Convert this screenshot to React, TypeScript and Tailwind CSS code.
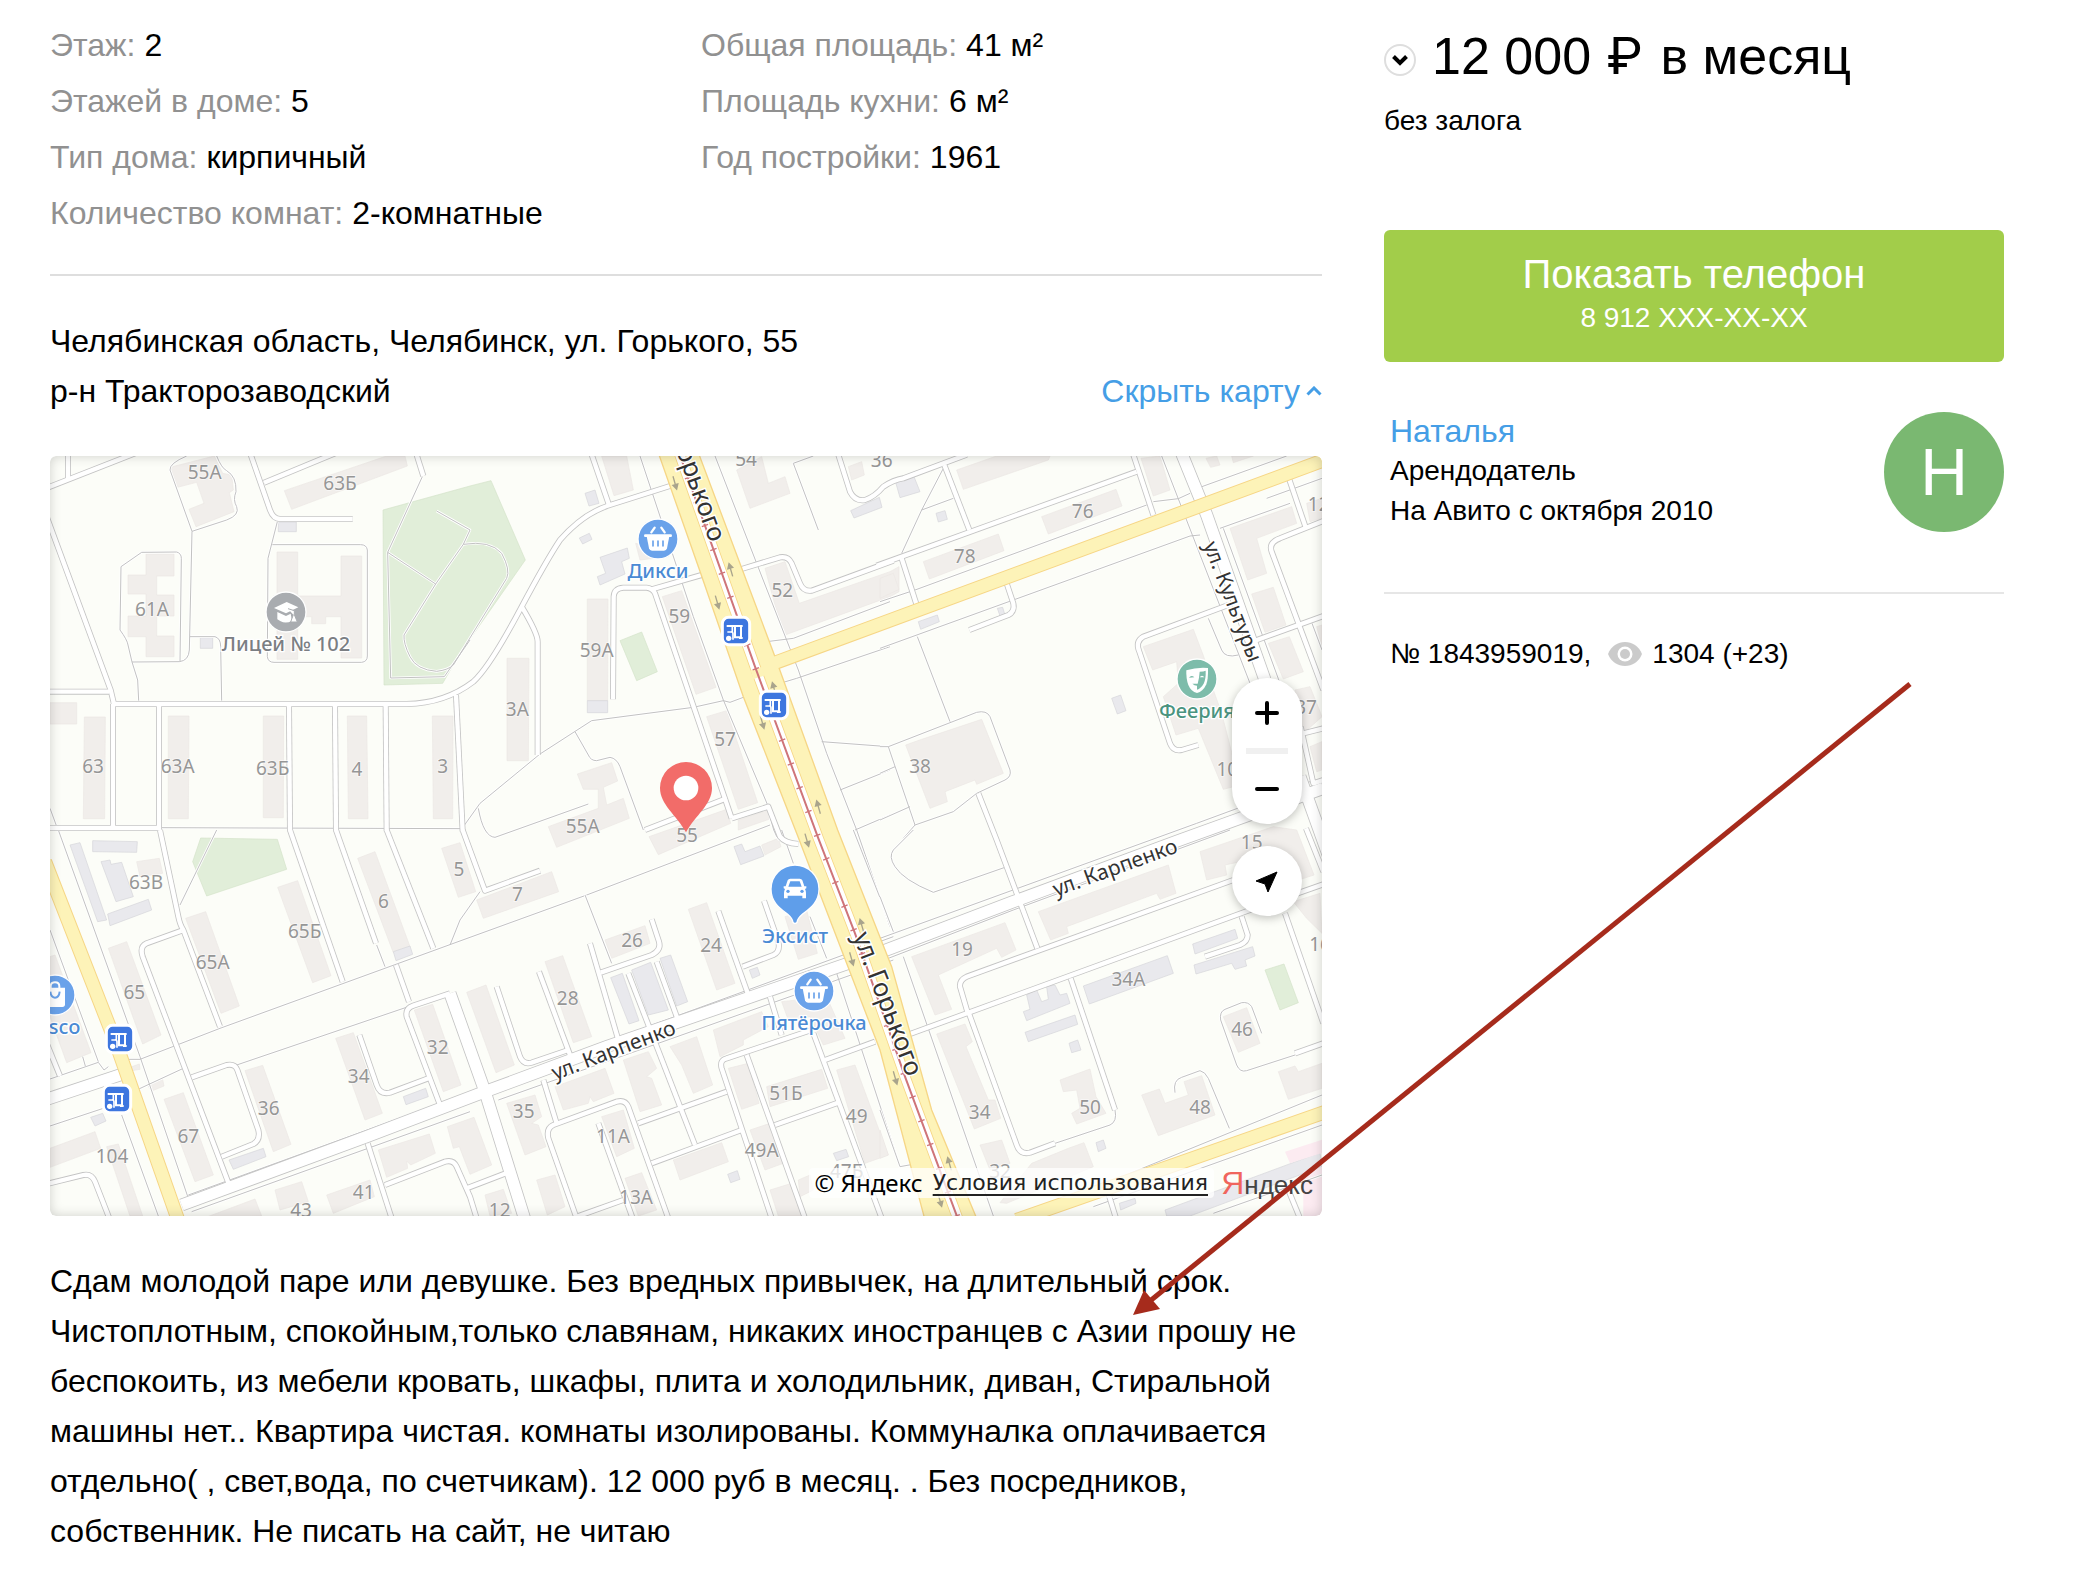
import React from "react";

type Label = [string, number, number];
type Tile = {
  x: number;
  y: number;
  buildings: string[];
  annexes: string[];
  parks: string[];
  lines: string[];
  roads: string[];
  labels: Label[];
};

/* The map is drawn in thirds of a pixel; each tile holds its own local coordinates. */
const tiles: Tile[] = [
  {
    x: 0,
    y: 0,
    buildings: [
      "390,52 523,18 548,70 575,75 580,120 568,128 582,185 468,230 447,178 492,160 470,97 412,112",
      "733,122 1040,18 1095,18 1102,48 755,178",
      "318,312 402,312 402,378 350,378 350,435 402,435 402,498 350,498 350,558 402,558 402,620 318,620 318,560 264,560 264,498 318,498 318,432 264,432 264,375 318,375",
      "711,306 773,306 773,438 903,438 903,318 965,318 965,624 903,624 903,500 857,500 857,521 815,521 815,500 773,500 773,628 711,628",
      "133,801 196,801 194,1106 130,1106",
      "30,758 110,758 110,822 30,822",
      "385,798 447,798 445,1106 385,1106",
      "670,798 731,798 730,1103 670,1103",
      "922,798 980,798 984,1106 925,1106",
      "1177,798 1239,798 1238,1106 1180,1106",
    ],
    annexes: ["715,216 769,216 769,245 715,245", "481,563 518,563 518,595 481,595"],
    parks: ["1029,180 1290,108 1353,92 1456,330 1260,610 1208,700 1032,705"],
    lines: [
      "M440,18 Q388,40 390,60 L456,244 L560,210 Q600,195 590,170 Q578,150 588,125 Q590,80 560,62 Q545,55 530,18",
      "M456,244 L448,600 Q446,632 418,635 L276,636 L264,585 Q262,570 240,540 L243,350 L305,307 L410,306 Q424,310 424,325 L420,635",
      "M276,636 L293,690 L296,752",
      "M450,560 L525,560 Q542,565 542,590 L545,752",
      "M712,215 L684,325 L682,620 Q684,637 702,637 L965,637 Q982,635 982,618 L982,300 Q980,284 962,284 L697,284",
      "M1147,80 L1043,307 L1052,684 L1213,680 L1290,570",
      "M1043,307 L1187,402 L1270,283 L1290,240 L1190,183",
      "M1187,402 L1092,555 Q1090,580 1110,620 Q1130,660 1190,664 Q1225,660 1240,645",
      "M1270,283 Q1350,270 1385,310 Q1412,360 1400,385 L1240,645",
      "M360,1133 L1275,1136",
      "M30,1075 L65,1170",
    ],
    roads: [
      "M84,0 V90",
      "M20,114 L290,8",
      "M20,200 L212,720 L222,762",
      "M215,762 H1100 Q1215,760 1300,695 Q1350,650 1445,470 Q1520,330 1560,270 Q1630,190 1710,165 L1890,108",
      "M20,725 H208",
      "M630,8 L690,180 Q700,207 720,207 H938",
      "M672,98 L890,8",
      "M1128,8 L1150,78",
      "M219,762 V1134",
      "M357,768 V1140",
      "M747,768 L750,1144",
      "M885,768 L888,1144",
      "M1037,768 L1040,1144",
      "M1248,735 L1268,1144",
      "M20,1134 H360",
    ],
    labels: [
      ["55А", 494, 87],
      ["63Б", 900, 120],
      ["61А", 336, 497],
      ["63", 159, 970],
      ["63А", 413, 970],
      ["63Б", 698, 974],
      ["4", 951, 978],
      ["3", 1208, 970],
    ],
  },
  {
    x: 1260,
    y: 0,
    buildings: [
      "425,18 500,18 520,120 462,137",
      "527,280 600,300 625,320 540,330",
      "830,60 905,20 925,100 975,80 990,130 870,175",
      "1165,50 1205,35 1213,75 1175,90",
      "382,447 444,447 443,752 382,752",
      "141,625 207,625 205,932 141,932",
      "607,440 665,422 768,712 708,733",
      "740,800 800,782 893,1058 835,1078",
      "352,972 455,938 473,993 430,1012 440,1065 490,1045 508,1105 290,1192 265,1130 415,1075 415,1018 370,1018",
      "835,1110 925,1080 935,1105 835,1140",
      "567,1160 800,1078 812,1120 595,1214",
      "915,355 975,335 1018,460 1290,365 1317,350 1317,425 1290,440 975,555 945,465",
    ],
    annexes: [
      "382,752 443,752 443,788 382,788",
      "375,130 405,120 417,160 387,168",
      "358,264 388,250 396,268 368,282",
      "420,322 502,294 508,325 485,335 495,372 420,405 412,380 437,370",
      "1172,182 1258,142 1266,172 1182,204",
    ],
    parks: ["480,572 545,546 592,665 530,692"],
    lines: [
      "M540,18 L700,500 L790,750 L925,1070 Q940,1160 960,1170",
      "M765,18 L890,340 L1015,660 L1100,910 L1190,1140 L1290,1430",
      "M1060,18 L1000,40 L1075,240",
      "M920,575 L1000,565 L1290,455",
      "M960,700 L1010,685 L1290,590",
      "M1085,875 L1285,890",
      "M1140,1020 L1290,960",
      "M1185,1140 L1290,1095",
      "M850,742 L810,757 L790,752 L700,772 L395,812 L240,912 L60,1060 L10,1130",
      "M345,845 L385,915 Q392,932 410,932 L450,922 Q470,925 480,950 L550,1140",
      "M55,1075 Q70,1160 105,1162 L385,1062",
    ],
    roads: [
      "M393,8 L447,165",
      "M185,470 Q233,550 233,575 V915",
      "M459,748 L461,440 Q462,415 490,413 H560 Q578,415 585,430 L815,1105",
      "M575,418 L725,375",
      "M835,360 L960,322 Q985,318 995,340 L1020,400 Q1030,425 1055,422 L1300,332",
      "M555,1140 L800,1045",
      "M815,1105 L925,1070 L960,1160 Q975,1180 1015,1182",
      "M1133,8 L1170,125 Q1185,155 1215,150 Q1245,140 1270,110 Q1300,90 1330,85 L1520,14",
    ],
    labels: [
      ["54", 858, 48],
      ["36", 1265, 50],
      ["52", 967, 442],
      ["59", 658, 520],
      ["59А", 410, 622],
      ["3А", 172, 797],
      ["57", 795, 888],
      ["55А", 368, 1150],
      ["55", 681, 1176],
    ],
  },
  {
    x: 2520,
    y: 0,
    buildings: [
      "230,60 350,18 510,18 505,30 250,118",
      "783,25 840,18 870,120 820,138",
      "978,25 1010,18 1020,45 992,52",
      "1055,18 1120,18 1060,38",
      "485,200 708,118 726,168 505,252",
      "130,335 355,252 372,302 148,387",
      "0,385 40,370 57,418 0,445",
      "1050,235 1235,170 1250,220 1130,265 1160,370 1103,390",
      "1280,160 1326,145 1326,205 1290,215",
      "1115,432 1180,412 1218,525 1155,547",
      "1165,580 1228,560 1270,665 1210,687",
      "1245,720 1290,710 1326,800 1270,850",
      "790,590 940,538 972,622 1000,720 1025,790 1080,1005 1030,1018 955,835 888,855 850,740 895,700 890,635 818,660",
      "77,885 125,868 305,808 370,970 290,1003 285,990 195,1025 202,1055 150,1075",
      "1290,890 1326,875 1326,960 1310,965",
      "1310,530 1326,525 1326,590",
    ],
    annexes: [
      "45,90 100,75 120,125 60,143",
      "168,190 195,182 202,208 175,216",
      "115,515 172,495 178,515 122,538",
      "352,475 368,472 374,492 360,498",
      "695,745 722,735 738,782 712,792",
    ],
    parks: [],
    lines: [
      "M190,55 L125,180 L65,310",
      "M125,180 L220,145",
      "M0,455 L105,420 L800,165",
      "M820,155 L895,146 L930,130",
      "M960,112 L1220,18",
      "M845,18 L1110,700",
      "M1020,235 L1230,160",
      "M0,595 L400,450 L930,258 L960,255",
      "M112,560 L210,815",
      "M0,890 H25 L105,1125 L70,1165",
      "M25,890 L290,787 Q320,780 330,800 L390,960 Q395,980 375,990 L290,1030 L220,1085 L105,1125",
      "M0,970 L45,950",
      "M0,1110 L90,1070",
      "M985,505 L1025,600 Q1035,625 1075,615",
      "M1030,235 L1200,700",
      "M1296,520 L1326,600",
      "M1326,1030 L1298,1038 L1326,1120",
      "M1160,145 L1326,85",
    ],
    roads: [
      "M193,45 L268,240",
      "M-10,347 L770,65",
      "M65,325 L110,465",
      "M758,8 L820,195",
      "M1225,80 L1278,235",
      "M1330,213 L1200,265 Q1165,278 1175,305 L1330,720",
      "M380,400 L400,460 Q405,485 385,495 L268,540",
      "M1045,465 L790,560 Q765,575 778,605 L870,880 Q880,905 905,900 L955,885",
      "M1125,572 L1330,498",
      "M1270,850 L1330,835",
      "M1262,830 L1300,1000 L1330,990",
      "M295,1030 L350,1170 L472,1495",
    ],
    labels: [
      ["78", 254, 338],
      ["76", 608, 205],
      ["38", 120, 968],
      ["12", 1316, 182],
      ["37", 1278, 792],
      ["10", 1042, 978],
    ],
  },
  {
    x: 0,
    y: 1140,
    buildings: [
      "205,355 260,335 363,615 308,642",
      "437,265 497,245 598,528 543,550",
      "713,172 773,152 873,437 818,458",
      "953,85 1005,65 1110,350 1060,368",
      "1205,55 1260,38 1307,185 1255,202",
      "290,95 358,85 368,130 300,140",
      "372,808 430,788 520,1035 465,1055",
      "615,722 668,706 753,943 700,965",
      "887,625 940,608 1027,850 975,870",
      "1123,540 1178,523 1263,765 1210,785",
      "1015,960 1168,912 1186,970 1112,1005 1100,993 1103,1015 1040,1042",
      "1222,890 1302,862 1355,1005 1290,1033 1258,950 1240,955",
      "705,1080 785,1055 805,1115 720,1140",
      "860,1095 990,1050 1003,1100 880,1150",
      "490,1165 645,1107 665,1158",
      "30,955 165,905 182,955 30,1012",
      "200,950 235,942 308,1158 270,1158",
      "30,380 45,375 153,668 80,698 30,560",
      "270,712 298,702 300,718 275,722",
      "322,765 368,748 372,768 335,783",
    ],
    annexes: [
      "158,32 292,35 290,67 158,65",
      "90,45 120,38 200,270 173,275",
      "183,95 210,90 213,103 245,97 280,200 228,215",
      "203,252 325,208 335,240 210,287",
      "1060,365 1110,348 1118,373 1068,392",
      "1090,800 1157,775 1165,800 1098,824",
      "567,990 670,955 678,980 580,1018",
      "152,862 188,850 198,873 165,888",
    ],
    parks: ["482,24 712,28 740,118 500,198 458,95"],
    lines: [
      "M55,0 L300,680 L445,1105",
      "M265,688 H300 L540,595 L1290,322 L1640,195 L2190,-15",
      "M290,780 L430,715",
      "M590,705 L1105,530",
      "M1010,345 L1035,410",
      "M1230,345 L1260,270 L1320,185",
      "M530,0 L420,225",
      "M30,300 L175,695",
      "M30,747 L175,697 L192,720 L205,710",
      "M30,888 L190,835",
      "M245,855 L355,1158",
      "M445,1095 L1290,788",
      "M455,1145 L1290,845",
      "M128,680 L136,708",
    ],
    roads: [
      "M360,0 L415,260 Q420,285 430,300 L540,590",
      "M750,0 L908,455",
      "M888,0 L1008,340",
      "M1040,0 L1180,355",
      "M1268,0 L1335,182 L1500,122",
      "M425,302 L320,340 Q298,350 308,380 L565,1058",
      "M455,742 L560,705 Q585,700 592,720 L655,900 Q662,930 640,942 L545,980",
      "M1068,405 L1107,515",
      "M1230,490 L1120,527 Q1095,535 1100,560 L1200,825",
      "M958,615 L1010,765 Q1020,795 1050,788 L1165,745",
      "M983,940 L1055,1165",
      "M1035,1065 L1215,995 Q1240,988 1250,1010 L1290,1100 L1310,1165",
      "M20,1062 L130,1035 Q155,1030 165,1055 L208,1165",
      "M20,640 L60,738",
    ],
    labels: [
      ["63В", 318, 176],
      ["6", 1030, 235],
      ["5", 1257, 137],
      ["65А", 518, 417],
      ["65Б", 794, 323],
      ["65", 283, 507],
      ["32", 1193, 673],
      ["34", 956, 758],
      ["36", 686, 855],
      ["67", 445, 938],
      ["104", 216, 998],
      ["41", 971, 1106],
      ["43", 783, 1160],
    ],
  },
  {
    x: 1260,
    y: 1140,
    buildings: [
      "50,210 275,125 296,185 70,265",
      "435,330 555,287 570,340 455,385",
      "685,238 740,218 825,460 770,480",
      "255,395 308,377 395,620 340,638",
      "20,487 78,465 163,705 108,728",
      "975,260 1040,240 1072,370 1015,388",
      "965,515 1100,500 1155,625 1090,645 1050,560 985,570",
      "760,600 905,545 925,590 850,630 850,645 780,680",
      "630,650 710,620 758,765 700,790 665,705",
      "490,690 565,665 590,715 560,740 575,745 605,825 540,845",
      "285,770 435,715 462,790 400,815 390,800 385,820 310,840",
      "140,820 225,795 245,860 215,880 235,885 258,950 195,975",
      "425,860 490,840 523,955 470,980",
      "495,1045 545,1028 590,1140 535,1158",
      "230,1050 285,1035 315,1130 262,1155",
      "75,1095 130,1078 155,1150 90,1158",
      "640,990 785,938 805,995 660,1050",
      "805,715 865,700 897,820 845,838",
      "870,900 930,880 970,1000 915,1020",
      "920,770 1085,718 1103,775 930,830",
      "1130,720 1185,705 1285,975 1215,1000",
      "1015,1050 1050,1035 1060,1080 1020,1100",
      "930,1080 995,1060 1025,1158 955,1158",
      "905,45 955,25 963,50 915,75",
    ],
    annexes: [
      "822,50 845,42 855,65 900,48 912,78 842,104",
      "452,443 487,430 537,572 507,582",
      "515,420 572,397 625,540 565,555",
      "600,385 632,375 683,515 650,528",
      "868,420 892,412 900,435 877,445",
      "1120,970 1158,958 1166,980 1130,992",
      "803,1033 832,1022 840,1048 812,1058",
    ],
    parks: [],
    lines: [
      "M85,765 L1300,320",
      "M115,810 L1300,390",
      "M375,195 L455,400",
      "M1050,260 L1100,385",
      "M1130,430 L1320,1010",
      "M1180,0 L1300,305",
      "M965,0 L1000,100",
    ],
    roads: [
      "M110,470 L180,680 Q190,705 215,698 L325,660",
      "M237,425 L332,680",
      "M390,340 L475,630",
      "M422,428 L575,375 Q605,360 597,335 L575,268",
      "M505,430 L705,945",
      "M590,395 L652,565",
      "M775,243 L865,495",
      "M912,212 L955,335 Q962,365 940,375 L848,410",
      "M930,500 L965,615",
      "M250,750 L290,880",
      "M350,1165 L265,925 Q258,895 280,885 L470,815 Q495,808 505,830 L625,1165",
      "M415,880 L518,1165",
      "M535,880 L800,785",
      "M575,1000 L845,900",
      "M935,1165 L785,715 Q778,690 800,685 L1055,600",
      "M860,675 L1035,1165",
      "M1060,610 L1265,1165",
      "M1095,690 L1245,635",
      "M945,885 L1135,818",
      "M20,1075 L150,1025",
      "M350,1160 L490,1110",
    ],
    labels: [
      ["7", 172, 213],
      ["26", 516, 352],
      ["24", 753, 367],
      ["28", 323, 526],
      ["35", 191, 863],
      ["11А", 459, 940],
      ["13А", 528, 1122],
      ["12", 119, 1160],
      ["49А", 905, 980],
      ["51Б", 978, 810],
      ["49", 1190, 880],
      ["47Б", 1160, 1045],
    ],
  },
  {
    x: 2520,
    y: 1140,
    buildings: [
      "95,380 375,278 408,360 365,382 350,355 175,435 215,538 165,555",
      "475,245 865,105 888,190 840,208 830,190 560,290 565,310 512,330",
      "960,65 1180,-10 1250,0 1302,135 1240,155 1150,80 1035,105 1040,135 980,150",
      "1240,215 1320,190 1326,310 1280,265",
      "170,612 255,582 277,635 258,650 325,810 345,810 362,865 283,897",
      "300,945 365,930 390,1000 330,1020",
      "455,1000 565,955 612,938 640,1010 380,1120 360,1118",
      "540,750 630,717 648,800 678,850 590,882 575,850 600,835 590,780 550,785",
      "785,795 838,777 855,820 925,795 912,755 965,737 1005,855 835,917",
      "1030,560 1100,533 1140,640 1075,667",
      "1195,725 1245,708 1255,725 1326,700 1326,775 1225,808",
      "0,900 25,975 0,985",
    ],
    annexes: [
      "610,468 862,377 880,430 628,522",
      "440,495 470,480 485,515 505,508 500,470 525,465 540,495 560,490 570,520 440,572 430,545 450,538",
      "435,607 585,555 593,583 445,635",
      "567,640 593,630 603,660 575,668",
      "648,938 670,930 678,955 655,965",
      "938,342 1065,298 1073,325 945,372",
      "942,405 1118,350 1125,378 1095,390 1100,408 1065,418 1055,400 948,432",
      "718,1120 765,1105 768,1120 722,1140",
      "855,1140 1320,968 1326,1010 930,1158 860,1158",
    ],
    parks: ["1155,420 1212,402 1255,518 1200,540"],
    lines: [
      "M705,840 Q712,875 690,885 L525,940",
      "M0,200 L40,305",
      "M100,0 L40,60 Q25,80 45,110 Q70,150 160,187 L375,112",
      "M70,380 L340,1158",
      "M0,325 L950,-20 L1290,-145",
      "M25,385 L400,240 L1050,0",
      "M1145,610 L1115,530 Q1105,515 1085,518 L1035,538 Q1018,545 1022,570 L1070,705 Q1080,728 1100,722 L1245,675",
      "M885,788 Q878,750 905,742 L960,722 Q975,725 985,745 L1048,895",
      "M750,1030 L1326,795",
      "M640,1130 L1326,885",
      "M0,840 L60,1010 L115,1000",
      "M1000,1150 L1326,1035",
    ],
    roads: [
      "M1278,-5 L1330,125",
      "M262,545 L240,470 Q238,450 260,440 L1060,150",
      "M90,612 L1110,240 L1330,163",
      "M265,545 L410,945 Q420,975 450,968 L525,940",
      "M572,445 L705,840",
      "M1085,260 L1103,315 Q1103,335 1080,345 L975,380",
      "M1215,250 L1330,580",
      "M1245,670 L1330,640",
      "M685,1090 L708,1165",
      "M1225,1080 L1260,1165",
    ],
    labels: [
      ["19", 246, 378],
      ["34А", 745, 468],
      ["15", 1115, 57],
      ["34", 299, 868],
      ["50", 630, 852],
      ["48", 960, 852],
      ["46", 1086, 618],
      ["32", 360, 1045],
      ["16", 1320, 362],
    ],
  },
];

/* Streets wider than a driveway, in whole-map coordinates. */
const streets = [
  "M425,2265 L980,2060 L1335,1925 L1700,1790 L2120,1645 L2520,1507 L2920,1355 L3420,1170 L3850,1015",
  "M20,1948 L245,1873",
  "M1230,1630 L1335,1925 L1455,2310",
  "M3425,10 L3500,195 L3675,690",
  "M3780,980 L3870,1230",
];

const directionArrows: [number, number, boolean][] = [
  [1905, 100, true],
  [2032, 458, true],
  [2072, 358, false],
  [2202, 715, false],
  [2167, 818, true],
  [2335, 1070, false],
  [2301, 1172, true],
  [2465, 1425, false],
  [2435, 1528, true],
  [2566, 1885, true],
  [2728, 2140, false],
  [2700, 2252, true],
];

const tramLine = "M1918,10 L2145,650 L2335,1165 L2445,1450 L2595,1880 L2755,2310";

function Basket() {
  return (
    <g fill="none" stroke="#fff" strokeWidth="6" strokeLinecap="round">
      <path d="M-20 -20 L-10 -34 M20 -20 L10 -34" strokeWidth="7" />
      <path d="M-38 -10 H38" strokeWidth="8" />
      <path d="M-34 -8 H34 L27 28 Q25 35 18 35 H-18 Q-25 35 -27 28 Z" fill="#fff" stroke="none" />
      <path d="M-15 6 V21 M0 6 V21 M15 6 V21" stroke="#6aa2ea" strokeWidth="5" />
    </g>
  );
}

function Poi(props: {
  x: number;
  y: number;
  color: string;
  text: string;
  ink: string;
  labelX?: number;
  children: React.ReactNode;
}) {
  return (
    <g transform={`translate(${props.x} ${props.y})`}>
      <circle r="60" fill={props.color} stroke="#fff" strokeWidth="4" />
      {props.children}
      <text
        x={props.labelX ?? 0}
        y="118"
        textAnchor="middle"
        fontSize="60"
        fontWeight="500"
        fill={props.ink}
        stroke="#fff"
        strokeWidth="8"
        paintOrder="stroke"
      >
        {props.text}
      </text>
    </g>
  );
}

function Stop({ x, y }: { x: number; y: number }) {
  return (
    <g transform={`translate(${x} ${y})`}>
      <rect x="-41" y="-41" width="82" height="82" rx="19" fill="#3d76df" stroke="#fff" strokeWidth="9" />
      <g fill="none" stroke="#fff" strokeWidth="6">
        <path d="M-28 -15 H20" />
        <path d="M-26 3 H-14 Q-9 3 -9 8 V26 M-11 -15 V3" strokeWidth="5" />
        <path d="M-3 -15 V19 H15 V-15" />
        <path d="M9 21 H20" />
      </g>
      <circle cx="-22" cy="22" r="8" fill="#fff" />
    </g>
  );
}

function CityMap() {
  return (
    <svg
      viewBox="30 18 3816 2280"
      className="block w-full rounded-md bg-[#fcfdf8] font-['Noto_Sans','Open_Sans',sans-serif]"
      role="img"
      aria-label="Карта: Челябинск, ул. Горького, 55"
    >
      {tiles.map((t, i) => (
        <g key={i} transform={`translate(${t.x} ${t.y})`}>
          {t.parks.map((p) => (
            <polygon key={p} points={p} fill="#e1eed9" stroke="#d3e3c9" strokeWidth="2" />
          ))}
          {t.buildings.map((p) => (
            <polygon key={p} points={p} fill="#f1eeeb" stroke="#ebe7e4" strokeWidth="2" />
          ))}
          {t.annexes.map((p) => (
            <polygon key={p} points={p} fill="#e9e9ed" stroke="#d5d5da" strokeWidth="2" />
          ))}
        </g>
      ))}
      <path d="M3735 2105 L3850 2068 V2108 L3750 2140 Z M3790 2165 L3850 2150 V2300 H3790 Z" fill="#fcebf1" />
      {tiles.map((t, i) => (
        <g key={i} transform={`translate(${t.x} ${t.y})`} fill="none" strokeLinejoin="round">
          {t.lines.map((d) => (
            <path key={d} d={d} stroke="#fff" strokeWidth="8" />
          ))}
          {t.lines.map((d) => (
            <path key={d} d={d} stroke="#c2c2c2" strokeWidth="3" />
          ))}
        </g>
      ))}
      <g fill="none" strokeLinejoin="round">
        {streets.map((d) => (
          <path key={d} d={d} stroke="#c4c4c4" strokeWidth="39" />
        ))}
        {tiles.map((t, i) => (
          <g key={i} transform={`translate(${t.x} ${t.y})`} stroke="#c4c4c4" strokeWidth="18">
            {t.roads.map((d) => (
              <path key={d} d={d} />
            ))}
          </g>
        ))}
        {streets.map((d) => (
          <path key={d} d={d} stroke="#fff" strokeWidth="34" />
        ))}
        {tiles.map((t, i) => (
          <g key={i} transform={`translate(${t.x} ${t.y})`} stroke="#fff" strokeWidth="13">
            {t.roads.map((d) => (
              <path key={d} d={d} />
            ))}
          </g>
        ))}
      </g>

      {/* main yellow roads */}
      <g fill="none">
        <path d="M2190 644 L3870 24 M15 1235 L228 1780 L415 2312 M2930 2310 L3870 1981" stroke="#f6d686" strokeWidth="43" />
        <path
          d="M1852 0 L1982 370 L2110 740 L2270 1150 L2520 1800 L2655 2310 H2812 L2675 1980 L2555 1550 L2393 1140 L2205 620 L1972 0 Z"
          fill="#fdf3b8"
          stroke="#f6d686"
          strokeWidth="4"
        />
        <path d="M2160 655 L3870 24 M15 1235 L228 1780 L415 2312 M2930 2310 L3870 1981" stroke="#fdf3b8" strokeWidth="37" />
        <path d={tramLine} stroke="#f6d686" strokeWidth="33" />
        <path d={tramLine} stroke="#fff" strokeWidth="28" />
        <path d="M2149 656 L2157 682" stroke="#fdf3b8" strokeWidth="36" />
        <path d={tramLine} stroke="#cf7579" strokeWidth="6" />
        <path d={tramLine} stroke="#cf7579" strokeWidth="20" strokeDasharray="4 72" />
      </g>
      {directionArrows.map(([x, y, down]) => (
        <path
          key={`${x}-${y}`}
          transform={`translate(${x} ${y}) rotate(${down ? -16 : 164})`}
          d="M-2 -22 H2 V2 H11 L0 22 L-11 2 H-2 Z"
          fill="#a9a48c"
        />
      ))}

      <g fontSize="57" textAnchor="middle" fill="#969696" stroke="#fff" strokeOpacity="0.6" strokeWidth="5" paintOrder="stroke">
        {tiles.map((t, i) => (
          <g key={i} transform={`translate(${t.x} ${t.y})`}>
            {t.labels.map(([text, x, y]) => (
              <text key={`${text}-${x}`} x={x} y={y}>
                {text}
              </text>
            ))}
          </g>
        ))}
      </g>

      <g fill="#333" stroke="#fff" strokeWidth="9" paintOrder="stroke">
        <text transform="translate(1545 1891) rotate(-21)" fontSize="63">
          ул. Карпенко
        </text>
        <text transform="translate(3048 1340) rotate(-20)" fontSize="63">
          ул. Карпенко
        </text>
        <text transform="translate(2438 1458) rotate(69)" fontSize="77">
          ул. Горького
        </text>
        <text transform="translate(2010 280) rotate(70)" fontSize="77" textAnchor="end">
          ул. Горького
        </text>
        <text transform="translate(3490 284) rotate(69)" fontSize="63">
          ул. Культуры
        </text>
      </g>

      <Stop x={2088} y={543} />
      <Stop x={2202} y={765} />
      <Stop x={240} y={1767} />
      <Stop x={231} y={1947} />

      <Poi x={1854} y={267} color="#6aa2ea" ink="#4a8ad4" text="Дикси">
        <Basket />
      </Poi>
      <Poi x={2322} y={1623} color="#6aa2ea" ink="#4a8ad4" text="Пятёрочка">
        <Basket />
      </Poi>
      <Poi x={45} y={1635} color="#6aa2ea" ink="#4a8ad4" text="Cisco" labelX={2}>
        <path d="M-30 -22 H30 V28 Q30 36 22 36 H-30 Z" fill="#fff" />
        <path d="M-13 -20 V-26 Q-13 -38 0 -38 Q13 -38 13 -26 V-20" fill="none" stroke="#fff" strokeWidth="6" />
        <path d="M-14 -10 Q-12 8 0 8 Q12 8 14 -10" fill="none" stroke="#6aa2ea" strokeWidth="6" />
      </Poi>
      <Poi x={738} y={486} color="#a9acb0" ink="#7b7e83" text="Лицей № 102">
        <path d="M-36 -12 L2 -30 L37 -14 L0 4 Z" fill="#fff" />
        <path d="M-26 0 L0 12 L14 5 L18 26 Q0 36 -16 28 L-26 22 Z" fill="#fff" />
        <path d="M6 -10 L25 -4 V8 L34 30 H14 L22 8" fill="#fff" stroke="#a9acb0" strokeWidth="3" />
      </Poi>
      <Poi x={3471} y={687} color="#7dbcaa" ink="#4a9480" text="Феерия">
        <path d="M-32 -26 Q0 -36 33 -33 Q34 0 28 16 Q18 38 0 42 Q-18 38 -26 18 Q-33 0 -32 -26 Z" fill="#fff" />
        <path d="M8 -22 Q20 -22 26 -25 Q27 0 20 14 Q12 28 0 32 V20 Q-8 20 -14 14 H2 L6 -4 Z" fill="#7dbcaa" />
        <path d="M-24 -4 Q-17 -14 -8 -5 Z" fill="#7dbcaa" />
        <path d="M8 -5 Q15 -14 22 -5 Z" fill="#fff" />
      </Poi>

      <g transform="translate(2265 1317)">
        <path d="M0 -72 A72 72 0 0 1 72 0 C72 42 42 60 22 76 Q8 88 6 100 A7 7 0 0 1 -6 100 Q-8 88 -22 76 C-42 60 -72 42 -72 0 A72 72 0 0 1 0 -72 Z" fill="#5f9eea" stroke="#fff" strokeWidth="4" />
        <path d="M-34 -8 H-28 L-22 -26 Q-20 -31 -14 -31 H14 Q20 -31 22 -26 L28 -8 H34 L34 -2 L30 0 Q33 6 33 12 V28 H22 V20 H-22 V28 H-33 V12 Q-33 6 -30 0 L-34 -2 Z" fill="#fff" />
        <path d="M-20 -7 L-14 -23 H14 L20 -7 Z" fill="#5f9eea" />
        <circle cx="-21" cy="7" r="5" fill="#5f9eea" />
        <circle cx="21" cy="7" r="5" fill="#5f9eea" />
        <text y="163" textAnchor="middle" fontSize="60" fontWeight="500" fill="#4a8ad4" stroke="#fff" strokeWidth="8" paintOrder="stroke">
          Эксист
        </text>
      </g>

      <path
        d="M1938 936 A78 78 0 0 1 2016 1014 C2016 1064 1966 1096 1938 1147 C1910 1096 1860 1064 1860 1014 A78 78 0 0 1 1938 936 Z"
        fill="#f26c69"
      />
      <circle cx="1938" cy="1014" r="37" fill="#fff" />
    </svg>
  );
}

const leftParams = [
  ["Этаж:", "2"],
  ["Этажей в доме:", "5"],
  ["Тип дома:", "кирпичный"],
  ["Количество комнат:", "2-комнатные"],
];
const rightParams = [
  ["Общая площадь:", "41 м²"],
  ["Площадь кухни:", "6 м²"],
  ["Год постройки:", "1961"],
];

function Params({ items }: { items: string[][] }) {
  return (
    <dl className="flex-1">
      {items.map(([name, value]) => (
        <div key={name} className="flex gap-[9px]">
          <dt className="text-[#919191]">{name}</dt>
          <dd>{value}</dd>
        </div>
      ))}
    </dl>
  );
}

export default function App() {
  return (
    <main className="relative grid min-h-screen grid-cols-[1272fr_620fr] items-start gap-x-[62px] overflow-hidden bg-white pl-[50px] pr-24 font-['Liberation_Sans',Arial,sans-serif] text-[32px] text-black">
      <section className="min-w-0 pt-[17px]">
        <div className="flex gap-[30px] leading-[56px]">
          <Params items={leftParams} />
          <Params items={rightParams} />
        </div>
        <hr className="mt-[33px] border-t-2 border-[#dedede]" />

        <div className="mt-10 flex items-end justify-between leading-[50px]">
          <address className="not-italic">
            Челябинская область, Челябинск, ул. Горького, 55
            <br />
            р-н Тракторозаводский
          </address>
          <button type="button" className="flex shrink-0 cursor-pointer items-center gap-[6px] text-[#459ee6]">
            Скрыть карту
            <svg viewBox="0 0 16 10" className="h-[10px] w-4" aria-hidden="true">
              <path d="M1.5 8.5 L8 2 L14.5 8.5" fill="none" stroke="currentColor" strokeWidth="3" />
            </svg>
          </button>
        </div>

        <div className="relative mt-10 overflow-hidden rounded-md">
          <CityMap />
          <div className="pointer-events-none absolute inset-0 rounded-md shadow-[inset_0_0_12px_rgba(0,0,0,0.18)]" />
          <div className="absolute right-5 top-[222px] flex flex-col gap-[22px]">
            <div className="flex w-[70px] flex-col items-center rounded-full bg-white shadow-[0_2px_10px_rgba(0,0,0,0.25)]">
              <button type="button" aria-label="Приблизить" className="flex h-[70px] w-full cursor-pointer items-center justify-center">
                <svg viewBox="0 0 24 24" className="size-6" aria-hidden="true">
                  <path d="M12 2 V22 M2 12 H22" stroke="#000" strokeWidth="4" strokeLinecap="round" />
                </svg>
              </button>
              <div className="h-[6px] w-[42px] bg-[#f0f0f0]" />
              <button type="button" aria-label="Отдалить" className="flex h-[70px] w-full cursor-pointer items-center justify-center">
                <svg viewBox="0 0 24 24" className="size-6" aria-hidden="true">
                  <path d="M2 12 H22" stroke="#000" strokeWidth="4" strokeLinecap="round" />
                </svg>
              </button>
            </div>
            <button
              type="button"
              aria-label="Моё местоположение"
              className="flex size-[70px] cursor-pointer items-center justify-center rounded-full bg-white shadow-[0_2px_10px_rgba(0,0,0,0.25)]"
            >
              <svg viewBox="0 0 24 24" className="size-6" aria-hidden="true">
                <path d="M22 3 L13 23 L10 15 L1 12 Z" fill="#000" stroke="#000" strokeLinejoin="round" />
              </svg>
            </button>
          </div>
          <div className="absolute bottom-[18px] right-[108px] flex gap-[10px] rounded bg-white/75 px-[6px] font-['DejaVu_Sans',sans-serif] text-[22px] leading-[30px]">
            <span className="font-['Noto_Sans',sans-serif] text-[24px]">© Яндекс</span>
            <a href="#terms" className="text-[#222] underline decoration-2 underline-offset-4">
              Условия использования
            </a>
          </div>
          <a
            href="#yandex"
            className="absolute bottom-[11px] right-[9px] flex items-baseline text-[26px] leading-[40px] text-[#444]"
          >
            <span className="text-[32px] text-[#f0655d]">Я</span>ндекс
          </a>
        </div>

        <p className="mt-10 leading-[50px]">
          Сдам молодой паре или девушке. Без вредных привычек, на длительный срок. Чистоплотным, спокойным,только
          славянам, никаких иностранцев с Азии прошу не беспокоить, из мебели кровать, шкафы, плита и холодильник,
          диван, Стиральной машины нет.. Квартира чистая. комнаты изолированы. Коммуналка оплачивается отдельно( ,
          свет,вода, по счетчикам). 12 000 руб в месяц. . Без посредников, собственник. Не писать на сайт, не читаю
        </p>
      </section>

      <aside className="min-w-0 pt-[26px] text-[28px] leading-10">
        <div className="flex items-center gap-4">
          <button
            type="button"
            aria-label="История цены"
            className="mt-2 flex size-8 shrink-0 cursor-pointer items-center justify-center rounded-full border-2 border-[#dedede]"
          >
            <svg viewBox="0 0 16 12" className="h-3 w-4" aria-hidden="true">
              <path d="M1.500 2.500 L8 9 L14.500 2.500" fill="none" stroke="#000" strokeWidth="4" />
            </svg>
          </button>
          <p className="text-[52px] leading-[60px]">
            12 000 <span className="ml-[2px] mr-1 font-['Roboto',sans-serif] leading-none">₽</span> в месяц
          </p>
        </div>
        <p className="mt-[15px]">без залога</p>
        <button
          type="button"
          className="mt-[89px] flex h-[132px] w-full cursor-pointer flex-col items-center rounded-md bg-[#a2cd4a] pt-[21px] text-white"
        >
          <span className="text-[40px] leading-[47px]">Показать телефон</span>
          <span>8 912 XXX-XX-XX</span>
        </button>

        <div className="mt-[50px] flex items-start justify-between pl-[6px]">
          <div>
            <a href="#seller" className="block text-[32px] leading-[39px] text-[#459ee6]">
              Наталья
            </a>
            <p>Арендодатель</p>
            <p>На Авито с октября 2010</p>
          </div>
          <div className="flex size-[120px] items-center justify-center rounded-full bg-[#7ab871] text-[66px] text-white">
            Н
          </div>
        </div>

        <hr className="mt-[60px] border-t-2 border-[#e6e6e6]" />
        <div className="mt-10 flex items-center pl-[6px]">
          <span>№ 1843959019,</span>
          <svg viewBox="0 0 36 24" className="ml-4 mr-[9px] h-6 w-9" role="img" aria-label="Просмотры">
            <path d="M1 12 C7 -4 29 -4 35 12 C29 28 7 28 1 12 Z" fill="#cbcbcb" />
            <circle cx="18" cy="12" r="7.500" fill="#fff" />
            <circle cx="18" cy="12" r="5" fill="#cbcbcb" />
          </svg>
          <span>1304 (+23)</span>
        </div>
      </aside>

      {/* annotation arrow pointing at the description */}
      <svg viewBox="0 0 2100 1576" className="pointer-events-none absolute left-0 top-0 w-full" aria-hidden="true">
        <path d="M1910 684 L1150 1301" stroke="#a62b1c" strokeWidth="5" />
        <path d="M1133 1315 L1144 1290 L1160 1309 Z" fill="#a62b1c" />
      </svg>
    </main>
  );
}
